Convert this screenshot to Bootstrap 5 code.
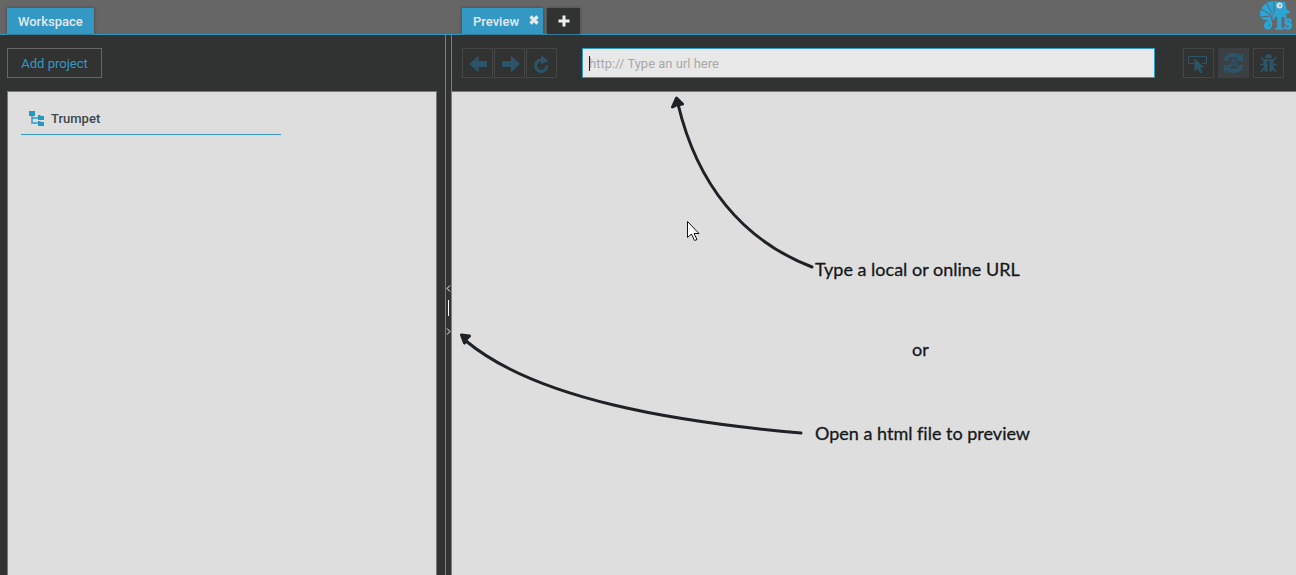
<!DOCTYPE html>
<html lang="en">
<head>
<meta charset="utf-8">
<meta name="viewport" content="width=device-width, initial-scale=1">
<title>Workspace</title>
<link rel="stylesheet" href="https://cdn.jsdelivr.net/npm/bootstrap@5.3.0/dist/css/bootstrap.min.css">
<style>
:root { --accent: #3399c4; --dark: #313332; --bar: #666; --paper: #dedede; }
body { font: 13px/20px Roboto, sans-serif; background: var(--dark); color: #40484c; }
.side { width: 445px; }
.split { width: 7px; border: solid var(--accent); border-width: 0 1px; margin-top: 34px; padding-top: 10px; color: #fff; }
.split i { width: 1px; height: 16px; background: #fff; }
.splitcap { position: absolute; top: 0; left: 0; right: 0; height: 35px; background: var(--bar); border-bottom: 1px solid var(--accent); z-index: -1; }
.tabs { height: 35px; padding-left: 7px; border-bottom: 1px solid var(--accent); }
.tabs button { height: 26px; border: 0; padding: 1px 11px 0; font-weight: 500; background: var(--accent); color: #e4e8ea; box-shadow: 0 0 3px #444; }
.tabs .tab-open { padding-right: 3px; margin-right: 4px; }
.tabs .tab-add { background: var(--dark); width: 33px; padding: 0; color: #eee; }
.tools { height: 56px; padding: 0 12px 0 7px; }
main .tabs, main .tools { padding-left: 10px; }
.tool { height: 30px; background: none; border: 1px solid #434545; color: #2c5468; padding: 0; border-radius: 0; }
.tool.icon { width: 31px; }
.tool.active-tool { background: #3d4042; border-color: #3d4042; }
.tool.add { border-color: #666; color: var(--accent); width: 95px; padding-top: 1px; }
.nav-tools { gap: 1px; }
.page-tools { gap: 4px; }
.url-box { margin: 0 28px 0 25px; }
.paper { background: var(--paper); border-top: 1px solid #777; }
.side .paper { border: 1px solid #777; border-bottom: 0; margin: 0 8px 0 7px; padding: 17px 13px; }
.project { width: 260px; height: 26px; border-bottom: 1px solid var(--accent); color: #40484c; font-weight: 500; padding-left: 8px; gap: 6px; }
.url { height: 30px; border: 1px solid var(--accent); background: #e8e8e8; border-radius: 0; padding: 0 6px; font-size: 13px; outline: 0; color: #222; }
.url::placeholder { color: #a8a8a8; opacity: 1; }
.caret { position: absolute; left: 7px; top: 8px; width: 1px; height: 15px; background: #222; }
.hints { font: 18px/24px Lato, sans-serif; font-variant-ligatures: none; color: #16191a; -webkit-text-stroke: 0.3px #16191a; padding: 165px 0 0 363px; }
.hints p { margin: 0 0 56px; }
.hints .middle { margin: 0 0 60px 97px; }
.arrows { position: absolute; left: 0; top: 0; pointer-events: none; }
.pointer { position: absolute; left: 235px; top: 129px; }
svg { display: block; }
</style>
</head>
<body class="vh-100 d-flex overflow-hidden position-relative">
<div class="splitcap"></div>
<aside class="side d-flex flex-column flex-shrink-0">
  <div class="tabs d-flex align-items-end"><button type="button">Workspace</button></div>
  <div class="tools d-flex align-items-center"><button type="button" class="tool add">Add project</button></div>
  <div class="paper flex-grow-1">
    <a href="#" class="project d-flex text-decoration-none">
      <svg width="16" height="20" viewBox="0 0 16 20"><path d="M3 5v9h7M3 9h7" fill="none" stroke="#3399c4" stroke-width="1.500"/><path d="M0 2h6v5H0zM9 6h2l1 1h3v4H9zM9 12h2l1 1h3v4H9z" fill="#2597c4"/></svg>
      Trumpet</a>
  </div>
</aside>
<div class="split d-flex flex-column align-items-center justify-content-center flex-shrink-0">
  <svg width="5" height="7" viewBox="0 0 5 7"><path d="M4 .5l-3 3 3 3" fill="none" stroke="#fff"/></svg>
  <i class="my-2"></i>
  <svg class="mt-1" width="5" height="7" viewBox="0 0 5 7"><path d="M1 .5l3 3-3 3" fill="none" stroke="#fff"/></svg>
</div>
<main class="flex-grow-1 d-flex flex-column">
  <div class="tabs d-flex align-items-end">
    <button type="button" class="tab-open d-flex align-items-center">Preview
      <svg class="ms-2 mb-1" width="13" height="12" viewBox="0 0 13 12"><path d="M3.500 2.500l7 7m0-7l-7 7" stroke="#e8eaec" stroke-width="3.200"/></svg></button>
    <button type="button" class="tab-add d-flex align-items-center justify-content-center" aria-label="New tab"><svg width="12" height="12" viewBox="0 0 12 12"><path d="M6 .5v11M.5 6h11" stroke="#eee" stroke-width="3"/></svg></button>
    <svg class="ms-auto flex-shrink-0" width="36" height="34" viewBox="0 0 36 34" role="img" aria-label="TS">
      <path d="M0 15C0 7 6 1 14 1V13Q11 14 11 18c0 3 2 4 1 8-1 5-8 5-8-1 0-4 5-5 6-1l-2 1 1 1c2 0 1-4-1-5C3 19 0 19 0 15z" fill="#2ba5d5"/>
      <path d="M14 1l11 1 2 8 4 2-7 3H13z" fill="#2ba5d5"/>
      <path d="M6 3l6 10M1 9l10 6M0 17l11-1M14 1v12" stroke="#566870" stroke-width="1"/>
      <circle cx="19.500" cy="5.500" r="3" fill="#ddd"/><circle cx="20" cy="5.500" r="1" fill="#997c72"/>
      <text x="13" y="29" font-family="Liberation Serif, serif" font-size="20" font-weight="700" fill="#2ba5d5" stroke="#2ba5d5" stroke-width="1">Ts</text>
    </svg>
  </div>
  <div class="tools d-flex align-items-center">
    <div class="nav-tools d-flex">
      <button type="button" class="tool icon" aria-label="Back"><svg width="29" height="28" viewBox="0 0 29 28"><path d="M6.500 15l9-8.500V12H24v6h-8.500v5.500z" fill="currentColor"/></svg></button>
      <button type="button" class="tool icon" aria-label="Forward"><svg width="29" height="28" viewBox="0 0 29 28"><path d="M25 15l-9-8.500V12H7v6h9v5.500z" fill="currentColor"/></svg></button>
      <button type="button" class="tool icon" aria-label="Reload"><svg width="29" height="28" viewBox="0 0 29 28"><path d="M16 11.300A5.700 5.700 0 1 0 20 16.500" fill="none" stroke="currentColor" stroke-width="3"/><path d="M14 6l7.500 6-7.500 3.500z" fill="currentColor"/></svg></button>
    </div>
    <div class="url-box flex-grow-1 position-relative"><input class="url w-100 d-block" type="text" aria-label="URL" placeholder="http:// Type an url here"><span class="caret"></span></div>
    <div class="page-tools d-flex">
      <button type="button" class="tool icon" aria-label="Inspect"><svg width="29" height="28" viewBox="0 0 29 28"><path d="M10 14.500H4.500v-7h18v7H18" fill="none" stroke="currentColor"/><path d="M10.500 9.500v13l3.500-3 2 5 2.500-1-2-5h4z" fill="currentColor"/></svg></button>
      <button type="button" class="tool icon active-tool" aria-label="Auto refresh"><svg width="29" height="28" viewBox="0 0 29 28"><path d="M6.500 12q1-6 8-6 4.500 0 6.500 3M22.500 16q-1 6-8 6-4.500 0-6.500-3" fill="none" stroke="currentColor" stroke-width="4"/><path d="M24 4v8h-8zM5 24v-8h8z" fill="currentColor"/><path d="M11 18l3.500-8 3.500 8m-6-2.500h5" fill="none" stroke="currentColor" stroke-width="1.500"/></svg></button>
      <button type="button" class="tool icon" aria-label="Debug"><svg width="29" height="28" viewBox="0 0 29 28"><path d="M11 9q0-4 3.500-4T18 9zM9.500 10h10v8q0 5-4 5V12h-2v11q-4 0-4-5z" fill="currentColor"/><path d="M10 12L7 8m12 4l3-4M10 15.500H6m13 0h4M10 19l-3 4m12-4l3 4" stroke="currentColor" stroke-width="1.700"/></svg></button>
    </div>
  </div>
  <div class="paper flex-grow-1 position-relative">
    <svg class="arrows" width="380" height="360" viewBox="0 0 380 360" fill="none" stroke="#1e2224" stroke-linecap="round" stroke-linejoin="round">
      <path d="M360 175C290 148 245 92 226 12M349 341C225 330 85 308 14 249" stroke-width="3"/>
      <path d="M224.500 6l-4 9 4-2 6-1zM9.500 243l8 1-3 3-2 4z" fill="#1e2224" stroke-width="3"/>
    </svg>
    <svg class="pointer" width="13" height="21" viewBox="0 0 13 21"><path d="M.5.500v16l4-3.500 3 6.500 2.500-1-3-6h5z" fill="#fff" stroke="#111"/></svg>
    <div class="hints">
      <p>Type a local or online URL</p>
      <p class="middle">or</p>
      <p>Open a html file to preview</p>
    </div>
  </div>
</main>
<script src="https://cdn.jsdelivr.net/npm/bootstrap@5.3.0/dist/js/bootstrap.bundle.min.js"></script>
</body>
</html>
